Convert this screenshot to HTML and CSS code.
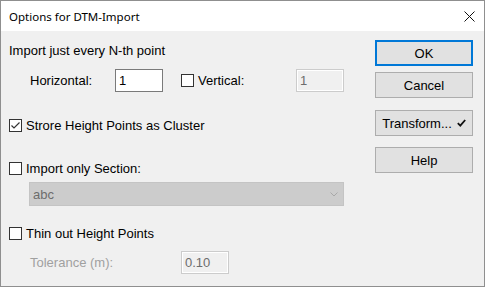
FILE: index.html
```html
<!DOCTYPE html>
<html lang="en">
  <head>
    <meta charset="UTF-8" />
    <title>Options for DTM-Import</title>
    <link rel="stylesheet" href="styles.css">
  </head>
  <body>
    <div class="dialog">
      <div class="titlebar">
        <span class="title">Options for DTM-Import</span>
        <svg class="close" width="11" height="11" viewBox="0 0 11 11">
          <path d="M0.5 0.5 L10.5 10.5 M10.5 0.5 L0.5 10.5" stroke="#111" stroke-width="1" fill="none" />
        </svg>
      </div>
      <div class="content">
        <div class="options">
          <div class="heading">Import just every N-th point</div>
          <div class="row step">
            <span class="field_label">Horizontal:</span>
            <div class="edit">1</div>
            <div class="check vertical"><span class="box"></span>Vertical:</div>
            <div class="edit disabled">1</div>
          </div>
          <div class="check cluster">
            <span class="box">
              <svg width="11" height="11" viewBox="0 0 11 11">
                <path d="M1.5 5.5 L4 8 L9.5 2.5" stroke="#333" stroke-width="1.2" fill="none" />
              </svg>
            </span>Strore Height Points as Cluster
          </div>
          <div class="check section">
            <span class="box"></span>Import only Section:
          </div>
          <div class="combo">
            <span>abc</span>
            <svg class="chevron" width="8" height="5" viewBox="0 0 8 5">
              <path d="M0.5 0.5 L4 4 L7.5 0.5" stroke="#a8a8a8" stroke-width="1" fill="none" />
            </svg>
          </div>
          <div class="check thin">
            <span class="box"></span>Thin out Height Points
          </div>
          <div class="row tolerance">
            <span class="field_label off">Tolerance (m):</span>
            <div class="edit disabled">0.10</div>
          </div>
        </div>
        <div class="buttons">
          <div class="btn default">OK</div>
          <div class="btn cancel">Cancel</div>
          <div class="btn transform">
            Transform...
            <svg class="tick" width="9" height="8" viewBox="0 0 9 8">
              <path d="M0.8 4.2 L3.3 6.6 L8.2 1" stroke="#111" stroke-width="1.8" fill="none" />
            </svg>
          </div>
          <div class="btn help">Help</div>
        </div>
      </div>
    </div>
  </body>
</html>
```

FILE: styles.css
```css
body {
  margin: 0;
  font-family: "Liberation Sans", Arial, sans-serif;
  font-size: 13px;
  color: #000;
}
.dialog {
  width: 485px;
  height: 287px;
  box-sizing: border-box;
  border: 1px solid #8f8f8f;
  background: #f0f0f0;
  display: flex;
  flex-direction: column;
}
.titlebar {
  height: 30px;
  background: #fff;
  display: flex;
  align-items: center;
  padding: 0 9px 0 8px;
}
.title {
  font-family: "Noto Sans", sans-serif;
  font-size: 11.5px;
}
.close {
  margin-left: auto;
}
.content {
  flex: 1;
  display: flex;
  padding-left: 8px;
}
.options {
  display: flex;
  flex-direction: column;
  width: 340px;
}
.heading {
  margin-top: 12px;
  height: 16px;
  line-height: 16px;
}
.row {
  display: flex;
  align-items: center;
}
.step {
  margin-top: 10px;
  height: 23px;
  padding-left: 21px;
}
.field_label {
  width: 85px;
}
.edit {
  width: 48px;
  height: 23px;
  box-sizing: border-box;
  border: 1px solid #7a7a7a;
  background: #fff;
  padding: 0 3px;
  line-height: 21px;
}
.edit.disabled {
  width: 48px;
  border-color: #cccccc;
  background: #f0f0f0;
  color: #6d6d6d;
  box-shadow: inset 0 0 0 1px #fff;
}
.check {
  display: flex;
  align-items: center;
  height: 16px;
}
.box {
  width: 13px;
  height: 13px;
  box-sizing: border-box;
  border: 1px solid #333;
  background: #fff;
  margin-right: 4px;
  display: flex;
}
.vertical {
  margin-left: 18px;
  width: 115px;
}
.cluster {
  margin-top: 25px;
}
.section {
  margin-top: 27px;
}
.combo {
  margin-top: 6px;
  margin-left: 20px;
  width: 315px;
  height: 24px;
  box-sizing: border-box;
  border: 1px solid #c4c4c4;
  background: #cccccc;
  color: #6d6d6d;
  display: flex;
  align-items: center;
  padding: 0 5px 0 3px;
}
.chevron {
  margin-left: auto;
}
.thin {
  margin-top: 19px;
}
.tolerance {
  margin-top: 10px;
  height: 23px;
  padding-left: 21px;
}
.tolerance .field_label {
  width: 151px;
}
.off {
  color: #a0a0a0;
}
.buttons {
  margin-left: auto;
  margin-right: 11px;
  padding-top: 9px;
  width: 98px;
  display: flex;
  flex-direction: column;
}
.btn {
  height: 26px;
  box-sizing: border-box;
  border: 1px solid #adadad;
  background: #e1e1e1;
  display: flex;
  align-items: center;
  justify-content: center;
}
.btn.default {
  border: 2px solid #0078d7;
}
.cancel {
  margin-top: 6px;
}
.transform {
  margin-top: 12px;
}
.tick {
  margin-left: 5px;
}
.help {
  margin-top: 11px;
}
```
